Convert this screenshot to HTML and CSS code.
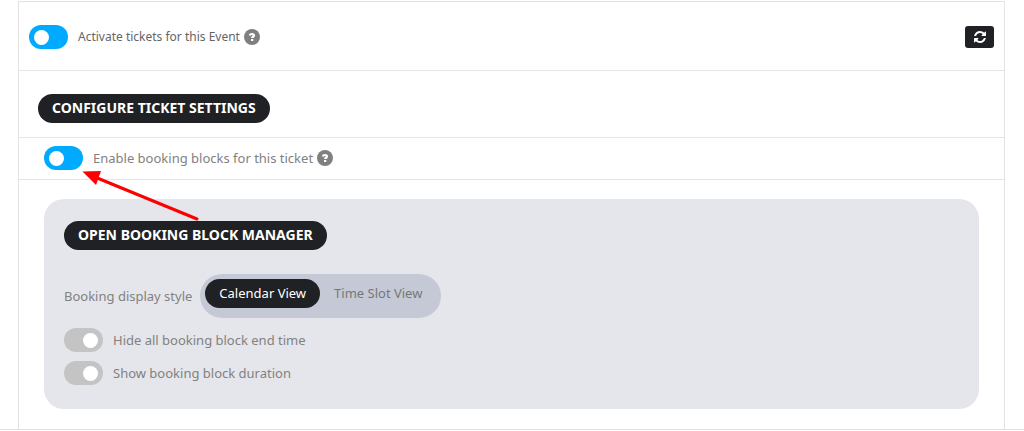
FILE: index.html
```html
<!DOCTYPE html>
<html lang="en">
<head>
<meta charset="utf-8">
<title>Event tickets</title>
<link rel="stylesheet" href="styles.css">
</head>
<body>
<main class="page">
  <section class="card">
    <div class="row row-activate">
      <label class="option option-small"><input class="switch" type="checkbox" checked><span>Activate tickets for this Event</span></label>
      <button class="help" type="button" aria-label="Help">
        <svg viewBox="0 0 16 16"><circle cx="8" cy="8" r="8"/><path d="M5.800 6.500C6 5.400 6.900 5 8 5s2 .6 2 1.500c0 1.300-1.900 1.200-1.900 2.600"/><rect x="7" y="10" width="2.300" height="2"/></svg>
      </button>
      <button class="refresh" type="button" aria-label="Refresh">
        <svg viewBox="0 0 1536 1536"><path d="M1511 928q0 5-1 7-64 268-268 434.500T764 1536q-146 0-282.500-55T238 1324l-129 129q-19 19-45 19t-45-19-19-45V960q0-26 19-45t45-19h448q26 0 45 19t19 45-19 45l-137 137q71 66 161 102t187 36q134 0 250-65t186-179q11-17 53-117 8-23 30-23h192q13 0 22.500 9.500t9.500 22.500zM1536 128v448q0 26-19 45t-45 19h-448q-26 0-45-19t-19-45 19-45l138-138Q969 256 768 256q-134 0-250 65T332 500q-11 17-53 117-8 23-30 23H50q-13 0-22.500-9.500T18 608v-7q65-268 270-434.500T768 0q146 0 284 55.500T1297 212l130-129q19-19 45-19t45 19 19 45z"/></svg>
      </button>
    </div>
    <div class="row row-configure">
      <button class="pill" type="button">CONFIGURE TICKET SETTINGS</button>
    </div>
    <div class="row row-blocks">
      <label class="option"><input class="switch" type="checkbox" checked><span>Enable booking blocks for this ticket</span></label>
      <button class="help" type="button" aria-label="Help">
        <svg viewBox="0 0 16 16"><circle cx="8" cy="8" r="8"/><path d="M5.800 6.500C6 5.400 6.900 5 8 5s2 .6 2 1.500c0 1.300-1.900 1.200-1.900 2.600"/><rect x="7" y="10" width="2.300" height="2"/></svg>
      </button>
    </div>
    <div class="panel">
      <button class="pill" type="button">OPEN BOOKING BLOCK MANAGER</button>
      <div class="display-style">
        <span id="style-label">Booking display style</span>
        <div class="segments" role="group" aria-labelledby="style-label">
          <button class="segment segment-active" type="button" aria-pressed="true">Calendar View</button>
          <button class="segment" type="button" aria-pressed="false">Time Slot View</button>
        </div>
      </div>
      <div class="options">
        <label class="option"><input class="switch" type="checkbox"><span>Hide all booking block end time</span></label>
        <label class="option"><input class="switch" type="checkbox"><span>Show booking block duration</span></label>
      </div>
    </div>
  </section>
  <svg class="arrow" width="120" height="54" viewBox="0 0 120 54" aria-hidden="true"><path class="arrow-line" d="M14 6.500 115 48"/><path class="arrow-head" d="M0.500 0.500 19 0 14 14Z"/></svg>
</main>
</body>
</html>
```
FILE: styles.css
```css
* {
  box-sizing: border-box;
}

body {
  margin: 0;
  background: #fff;
  color: #818181;
  font: 13px/18px "Noto Sans", sans-serif;
}

button {
  border: 0;
  margin: 0;
  padding: 0;
  font: inherit;
  cursor: pointer;
}

.page {
  position: relative;
  padding: 1px 19px 0 18px;
  border-bottom: 1px solid #dfdfdf;
}

.card {
  padding-bottom: 20px;
  border: 1px solid #e3e3e3;
  border-bottom: 0;
}

.row {
  display: flex;
  align-items: center;
  border-bottom: 1px solid #e5e5e5;
}

.row-activate {
  padding: 23px 10px 21px;
}

.row-configure {
  padding: 23px 19px 14px;
}

.row-blocks {
  padding: 8px 25px 9px;
}

.option {
  display: flex;
  align-items: center;
  gap: 10px;
}

.option-small {
  color: #656565;
  font-size: 12px;
}

.switch {
  appearance: none;
  display: flex;
  align-items: center;
  justify-content: flex-end;
  width: 39px;
  height: 24px;
  margin: 0;
  padding: 0 5px;
  border-radius: 12px;
  background: #c4c4c4;
}

.switch::before {
  content: "";
  width: 15px;
  height: 15px;
  border-radius: 50%;
  background: #fff;
}

.switch:checked {
  justify-content: flex-start;
  background: #00aaff;
}

.help {
  width: 16px;
  height: 16px;
  margin-left: 4px;
  background: none;
}

.help svg {
  display: block;
  fill: #808080;
}

.help path {
  fill: none;
  stroke: #fff;
  stroke-width: 2.2;
}

.help rect {
  fill: #fff;
}

.refresh {
  display: flex;
  align-items: center;
  justify-content: center;
  width: 29px;
  height: 22px;
  margin-left: auto;
  border-radius: 3px;
  background: #202124;
}

.refresh svg {
  width: 12px;
  height: 12px;
  fill: #fff;
}

.pill {
  padding: 4px 14px 5px;
  border-radius: 15px;
  background: #202124;
  color: #fff;
  font-size: 14px;
  font-weight: 700;
  line-height: 20px;
}

.panel {
  margin: 19px 25px 0;
  padding: 22px 20px 24px;
  border-radius: 20px;
  background: #e5e6eb;
}

.display-style {
  display: flex;
  align-items: center;
  gap: 8px;
  margin: 24px 0 10px;
}

.segments {
  display: flex;
  padding: 5px 5px 10px;
  border-radius: 22px;
  background: #c5c9d6;
}

.segment {
  padding: 5px 14px 6px;
  border-radius: 15px;
  background: none;
  color: #777;
}

.segment-active {
  background: #202124;
  color: #fff;
}

.options {
  display: grid;
  gap: 9px;
}

.arrow {
  position: absolute;
  top: 171px;
  left: 82px;
  pointer-events: none;
}

.arrow-line {
  fill: none;
  stroke: #f00;
  stroke-width: 3;
  stroke-linecap: round;
}

.arrow-head {
  fill: #f00;
}
```
